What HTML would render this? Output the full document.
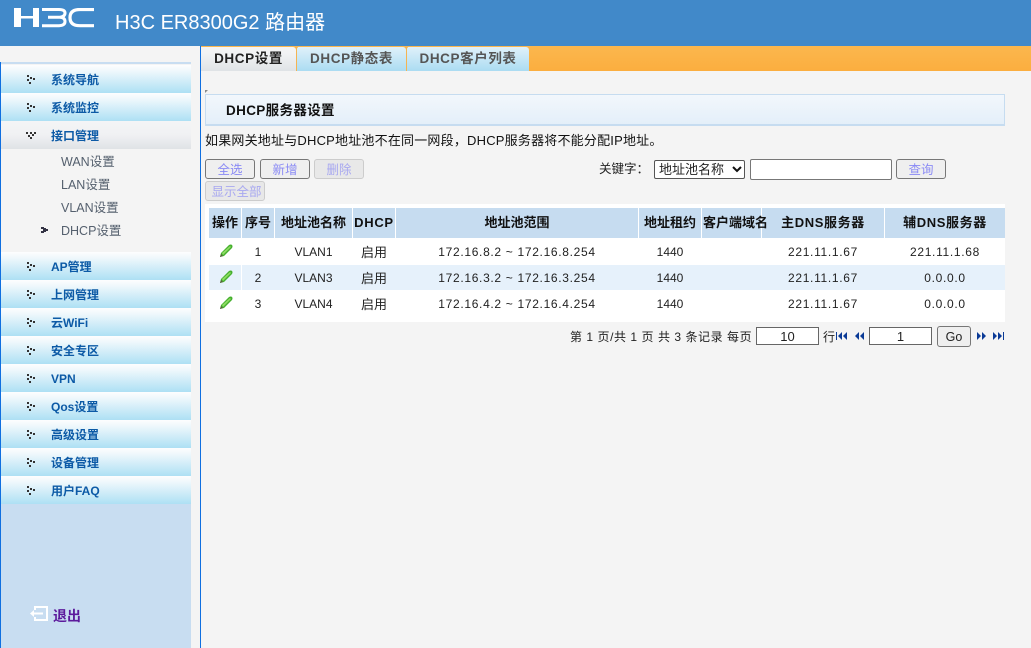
<!DOCTYPE html>
<html><head><meta charset="utf-8"><style>
*{box-sizing:border-box}
html,body{margin:0;padding:0}
body{width:1031px;height:648px;overflow:hidden;background:#f4f4f4;position:relative;font:13px/16px "Liberation Sans","Noto Sans CJK SC",sans-serif;color:#222}
.a{position:absolute;white-space:nowrap}
.m{position:absolute;left:1px;width:190px;height:28px;background:linear-gradient(#fdfefe,#f0f8fc 20%,#ade0f4);color:#0c5aa6;font-weight:bold;font-size:12px;line-height:31px;padding-left:50px}
.m.g{background:linear-gradient(#f4f5f6,#f0f1f3 50%,#dfe3e6)}
.d{position:absolute;left:25px;top:10px}
.s{position:absolute;left:61px;font-size:12.5px;color:#55606e;line-height:16px;white-space:nowrap}
.tab{position:absolute;top:47px;height:24px;background:linear-gradient(#e0f1fa,#abdcf2);color:#555;font-weight:bold;font-size:13.5px;line-height:23px;text-align:center;border-top-right-radius:3px;letter-spacing:.6px}
.btn{position:absolute;height:20px;border:1px solid #777;border-radius:3px;background:#efefef;color:#8a8af5;font-size:12.5px;line-height:20px;text-align:center}
.btn.x{border-color:#ccc;background:#e8e8e8;color:#a8a8f0}
.th{position:absolute;top:208px;height:30px;background:#c6dcf0;font-weight:bold;font-size:13px;line-height:30px;text-align:center;color:#111;white-space:nowrap}
.td{position:absolute;height:26px;font-size:12px;line-height:29px;text-align:center;color:#222;white-space:nowrap}
.n{letter-spacing:.68px}
.in{position:absolute;background:#fff;border:1px solid #666;border-radius:2px}
</style></head><body>
<div class="a" style="left:0;top:0;width:1031px;height:46px;background:#4189c9"></div>
<svg class="a" style="left:14px;top:8px" width="82" height="20" viewBox="0 0 82 20" fill="none" stroke="#fff">
<path d="M0 0h7v8h12V0h6v19h-6V10.500H7V19H0z" fill="#fff" stroke="none"/>
<path d="M28 1.500H45Q51 1.500 51 5T46 9.200H34M46 9.200Q51 9.500 51 13.500T45 17.700H28" stroke-width="3"/>
<path d="M80 1.500H66Q56 1.500 56 9.600T66 17.700H80" stroke-width="3.200"/></svg>
<div class="a" style="left:115px;top:10px;font-size:20px;line-height:26px;color:#fff">H3C ER8300G2 路由器</div>

<div class="a" style="left:201px;top:46px;width:830px;height:25px;background:linear-gradient(#fbb74e,#fbae3f)"></div>
<div class="a" style="left:200px;top:46px;width:1px;height:602px;background:#0f6fe0"></div>
<div class="a" style="left:0;top:62px;width:1px;height:586px;background:#0f6fe0"></div>
<div class="a" style="left:1px;top:62px;width:190px;height:2px;background:#c8ddf1"></div>
<div class="a" style="left:1px;top:504px;width:190px;height:144px;background:#c8ddf1"></div>

<div class="tab" style="left:201px;width:95px;background:linear-gradient(#f4f4f4,#f2f3f4 25%,#dfe3e6);color:#222">DHCP设置</div>
<div class="tab" style="left:297px;width:109px">DHCP静态表</div>
<div class="tab" style="left:407px;width:122px">DHCP客户列表</div>
<div class="a" style="left:296px;top:47px;width:1px;height:24px;background:#f5b452"></div>
<div class="a" style="left:406px;top:47px;width:1px;height:24px;background:#f5b452"></div>
<svg class="a" style="left:294px;top:46px" width="5" height="3"><path d="M0 0h5L2.500 3z" fill="#f5b452"/></svg>
<svg class="a" style="left:404px;top:46px" width="5" height="3"><path d="M0 0h5L2.500 3z" fill="#f5b452"/></svg>

<div class="m" style="top:65px">系统导航<svg class="d" width="10" height="9"><path d="M1 0h2v2H1zM4 2h2v2H4zM7 3h2v2H7zM1 4h2v2H1zM3 7h2v2H3z" fill="#333"/></svg></div>
<div class="m" style="top:93px">系统监控<svg class="d" width="10" height="9"><path d="M1 0h2v2H1zM4 2h2v2H4zM7 3h2v2H7zM1 4h2v2H1zM3 7h2v2H3z" fill="#333"/></svg></div>
<div class="m g" style="top:121px">接口管理<svg class="d" width="11" height="9"><path d="M0 1h2v2H0zM4 1h2v2H4zM8 1h2v2H8zM2 4h2v2H2zM6 3h2v2H6zM4 6h2v2H4z" fill="#333"/></svg></div>
<div class="s" style="top:154px">WAN设置</div>
<div class="s" style="top:177px">LAN设置</div>
<div class="s" style="top:200px">VLAN设置</div>
<div class="s" style="top:223px">DHCP设置</div>
<svg class="a" style="left:41px;top:227px" width="7" height="6"><path d="M0 0h3v1h2v1h2v2H5v1H3v1H0V4h2V2H0z" fill="#334"/></svg>
<div class="m" style="top:252px;height:28px">AP管理<svg class="d" width="10" height="9"><path d="M1 0h2v2H1zM4 2h2v2H4zM7 3h2v2H7zM1 4h2v2H1zM3 7h2v2H3z" fill="#333"/></svg></div>
<div class="m" style="top:280px">上网管理<svg class="d" width="10" height="9"><path d="M1 0h2v2H1zM4 2h2v2H4zM7 3h2v2H7zM1 4h2v2H1zM3 7h2v2H3z" fill="#333"/></svg></div>
<div class="m" style="top:308px">云WiFi<svg class="d" width="10" height="9"><path d="M1 0h2v2H1zM4 2h2v2H4zM7 3h2v2H7zM1 4h2v2H1zM3 7h2v2H3z" fill="#333"/></svg></div>
<div class="m" style="top:336px">安全专区<svg class="d" width="10" height="9"><path d="M1 0h2v2H1zM4 2h2v2H4zM7 3h2v2H7zM1 4h2v2H1zM3 7h2v2H3z" fill="#333"/></svg></div>
<div class="m" style="top:364px">VPN<svg class="d" width="10" height="9"><path d="M1 0h2v2H1zM4 2h2v2H4zM7 3h2v2H7zM1 4h2v2H1zM3 7h2v2H3z" fill="#333"/></svg></div>
<div class="m" style="top:392px">Qos设置<svg class="d" width="10" height="9"><path d="M1 0h2v2H1zM4 2h2v2H4zM7 3h2v2H7zM1 4h2v2H1zM3 7h2v2H3z" fill="#333"/></svg></div>
<div class="m" style="top:420px">高级设置<svg class="d" width="10" height="9"><path d="M1 0h2v2H1zM4 2h2v2H4zM7 3h2v2H7zM1 4h2v2H1zM3 7h2v2H3z" fill="#333"/></svg></div>
<div class="m" style="top:448px">设备管理<svg class="d" width="10" height="9"><path d="M1 0h2v2H1zM4 2h2v2H4zM7 3h2v2H7zM1 4h2v2H1zM3 7h2v2H3z" fill="#333"/></svg></div>
<div class="m" style="top:476px">用户FAQ<svg class="d" width="10" height="9"><path d="M1 0h2v2H1zM4 2h2v2H4zM7 3h2v2H7zM1 4h2v2H1zM3 7h2v2H3z" fill="#333"/></svg></div>

<svg class="a" style="left:29px;top:606px" width="20" height="16" fill="none" stroke="#fff" stroke-width="2"><path d="M6 4V1H18V14H6V11M14 7.500H5"/><path d="M1 7.500L5 4V11Z" fill="#fff" stroke="none"/></svg>
<div class="a" style="left:53px;top:608px;color:#5c1a9c;font-weight:bold;font-size:14px">退出</div>

<svg class="a" style="left:205px;top:90px" width="4" height="4"><path d="M0 0h3L0 3z" fill="#888"/></svg>
<div class="a" style="left:205px;top:94px;width:800px;height:32px;background:linear-gradient(#f2f7fc,#e4eff9);border:1px solid #c6dcf0;border-bottom-width:2px;font-weight:bold;font-size:13.5px;line-height:31px;padding-left:20px;color:#111;letter-spacing:.35px">DHCP服务器设置</div>
<div class="a" style="left:205px;top:133px;font-size:13px;color:#111;letter-spacing:.2px">如果网关地址与DHCP地址池不在同一网段，DHCP服务器将不能分配IP地址。</div>

<div class="btn" style="left:205px;top:159px;width:50px">全选</div>
<div class="btn" style="left:260px;top:159px;width:50px">新增</div>
<div class="btn x" style="left:314px;top:159px;width:50px">删除</div>
<div class="btn x" style="left:205px;top:181px;width:60px;padding-left:3px">显示全部</div>
<div class="a" style="left:599px;top:161px;font-size:12.5px">关键字：</div>
<div class="in" style="left:654px;top:160px;width:91px;height:19px;font-size:13px;line-height:17px;padding-left:4px;border-color:#555">地址池名称<svg class="a" style="left:77px;top:5px" width="10" height="7" fill="none" stroke="#111" stroke-width="2"><path d="M1 1l4 4 4-4"/></svg></div>
<div class="in" style="left:750px;top:159px;width:142px;height:21px;border-color:#777"></div>
<div class="btn" style="left:896px;top:159px;width:50px">查询</div>

<div class="a" style="left:205px;top:204px;width:800px;height:118px;background:#fff"></div>
<div class="a" style="left:209px;top:265px;width:796px;height:25px;background:#e6f1fb"></div>

<div class="th" style="left:209px;width:32px">操作</div>
<div class="th" style="left:242px;width:32px">序号</div>
<div class="th" style="left:275px;width:77px">地址池名称</div>
<div class="th" style="left:353px;width:42px;letter-spacing:.7px">DHCP</div>
<div class="th" style="left:396px;width:242px">地址池范围</div>
<div class="th" style="left:639px;width:62px">地址租约</div>
<div class="th" style="left:762px;width:122px;letter-spacing:.6px">主DNS服务器</div>
<div class="th" style="left:885px;width:120px;letter-spacing:.6px">辅DNS服务器</div>
<div class="th" style="left:702px;width:59px;text-align:left;padding-left:1px;z-index:1">客户端域名</div>

<div class="a" style="left:241px;top:238px;width:1px;height:52px;background:#fff"></div>

<svg class="a" style="left:218px;top:244px" width="16" height="14"><path d="M2 13l1-4L11 1q2-1 3 0t0 3L6 12z" fill="#45b02e"/><path d="M4 9L12 2l1 1-8 8z" fill="#8fdc63"/><path d="M2 13l1-3 2 2z" fill="#5c5c40"/></svg>
<svg class="a" style="left:218px;top:270px" width="16" height="14"><path d="M2 13l1-4L11 1q2-1 3 0t0 3L6 12z" fill="#45b02e"/><path d="M4 9L12 2l1 1-8 8z" fill="#8fdc63"/><path d="M2 13l1-3 2 2z" fill="#5c5c40"/></svg>
<svg class="a" style="left:218px;top:296px" width="16" height="14"><path d="M2 13l1-4L11 1q2-1 3 0t0 3L6 12z" fill="#45b02e"/><path d="M4 9L12 2l1 1-8 8z" fill="#8fdc63"/><path d="M2 13l1-3 2 2z" fill="#5c5c40"/></svg>

<div class="td" style="left:242px;top:238px;width:32px">1</div>
<div class="td" style="left:275px;top:238px;width:77px">VLAN1</div>
<div class="td" style="left:353px;top:238px;width:42px;font-size:13px">启用</div>
<div class="td n" style="left:396px;top:238px;width:242px">172.16.8.2 ~ 172.16.8.254</div>
<div class="td" style="left:639px;top:238px;width:62px">1440</div>
<div class="td n" style="left:762px;top:238px;width:122px">221.11.1.67</div>
<div class="td n" style="left:885px;top:238px;width:120px">221.11.1.68</div>

<div class="td" style="left:242px;top:264px;width:32px">2</div>
<div class="td" style="left:275px;top:264px;width:77px">VLAN3</div>
<div class="td" style="left:353px;top:264px;width:42px;font-size:13px">启用</div>
<div class="td n" style="left:396px;top:264px;width:242px">172.16.3.2 ~ 172.16.3.254</div>
<div class="td" style="left:639px;top:264px;width:62px">1440</div>
<div class="td n" style="left:762px;top:264px;width:122px">221.11.1.67</div>
<div class="td n" style="left:885px;top:264px;width:120px">0.0.0.0</div>

<div class="td" style="left:242px;top:290px;width:32px">3</div>
<div class="td" style="left:275px;top:290px;width:77px">VLAN4</div>
<div class="td" style="left:353px;top:290px;width:42px;font-size:13px">启用</div>
<div class="td n" style="left:396px;top:290px;width:242px">172.16.4.2 ~ 172.16.4.254</div>
<div class="td" style="left:639px;top:290px;width:62px">1440</div>
<div class="td n" style="left:762px;top:290px;width:122px">221.11.1.67</div>
<div class="td n" style="left:885px;top:290px;width:120px">0.0.0.0</div>

<div class="a" style="left:570px;top:329px;font-size:12px;color:#222;letter-spacing:.55px">第 1 页/共 1 页 共 3 条记录 每页</div>
<div class="in" style="left:756px;top:327px;width:63px;height:18px;font-size:13px;line-height:17px;text-align:center;border-radius:0">10</div>
<div class="a" style="left:823px;top:329px;font-size:12px">行</div>
<svg class="a" style="left:836px;top:331px" width="12" height="10" fill="#0a3a96"><path d="M0 1h1v8H0zM6 1v8L2 5zM11 1v8L7 5z"/></svg>
<svg class="a" style="left:854px;top:331px" width="10" height="10" fill="#0a3a96"><path d="M5 1v8L1 5zM10 1v8L6 5z"/></svg>
<div class="in" style="left:869px;top:327px;width:63px;height:18px;font-size:13px;line-height:17px;text-align:center;border-radius:0">1</div>
<div class="btn" style="left:937px;top:326px;width:34px;height:21px;color:#222;font-size:12.5px;line-height:20px">Go</div>
<svg class="a" style="left:977px;top:331px" width="10" height="10" fill="#0a3a96"><path d="M0 1v8l4-4zM5 1v8l4-4z"/></svg>
<svg class="a" style="left:993px;top:331px" width="12" height="10" fill="#0a3a96"><path d="M0 1v8l4-4zM5 1v8l4-4zM10 1h1v8h-1z"/></svg>
</body></html>
